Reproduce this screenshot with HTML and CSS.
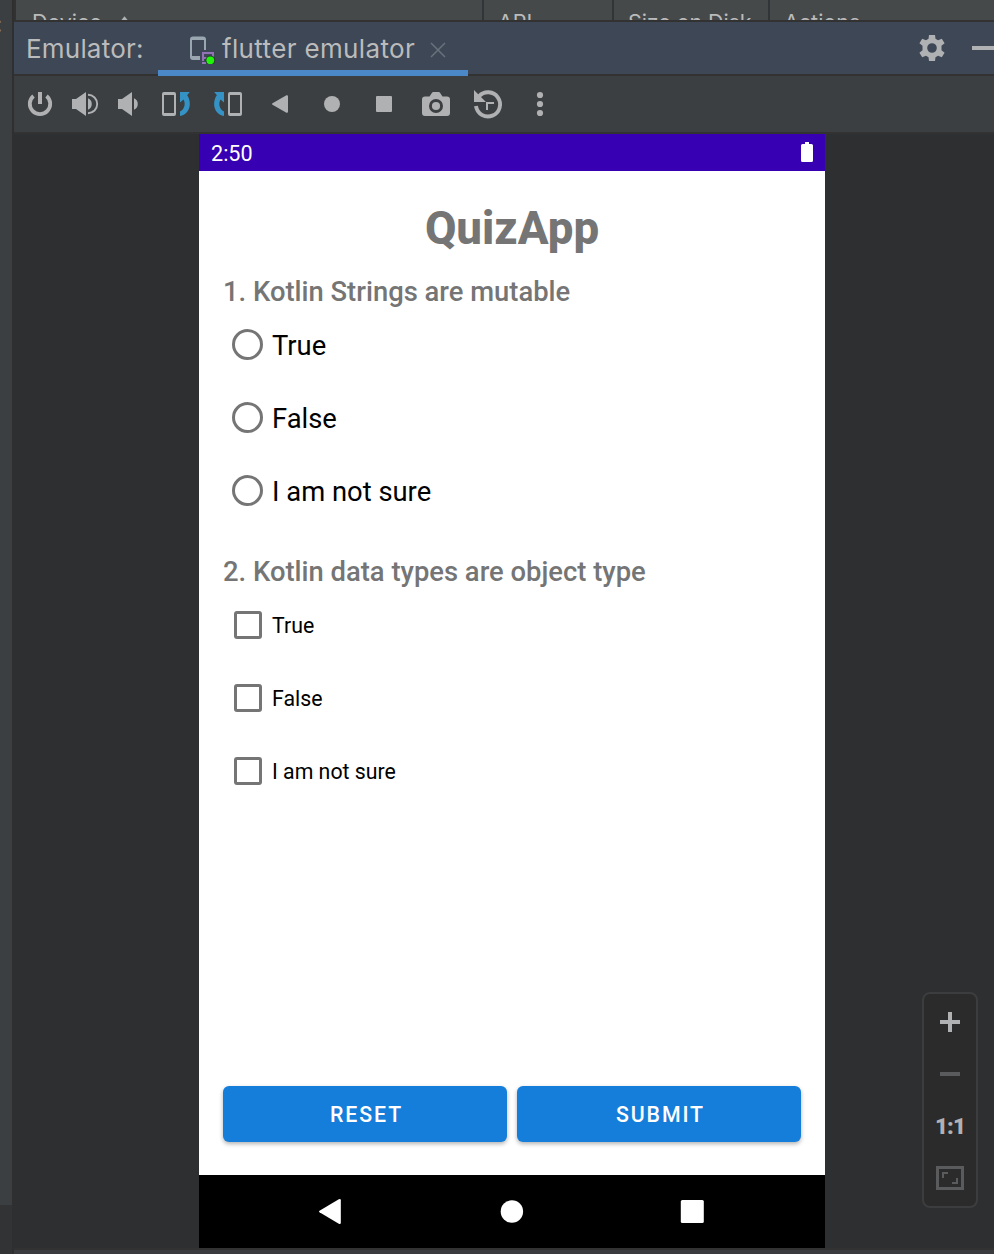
FILE: index.html
```html
<!DOCTYPE html>
<html lang="en">
<head>
<meta charset="utf-8">
<title>Emulator</title>
<link rel="stylesheet" href="styles.css">
</head>
<body>
<div class="ide">
  <aside class="stripe"><div class="stripe-fill"><span class="stripe-mark">:</span></div></aside>
  <main class="tool-window">
    <div class="table-head">
      <div class="th th-device"><span class="t-device">Device</span> <svg class="sort" viewBox="0 0 10 6"><path d="M0 6 5 0l5 6z"/></svg></div>
      <div class="th th-api"><span class="t-api">API</span></div>
      <div class="th th-size"><span class="t-size">Size on Disk</span></div>
      <div class="th th-actions"><span class="t-actions">Actions</span></div>
    </div>
    <header class="header">
      <div class="header-title"><span class="t-emu">Emulator:</span></div>
      <div class="tab">
        <svg class="tab-icon" viewBox="188 34 28 30">
          <path d="M206 50V39.500a3 3 0 0 0-3-3h-10a3 3 0 0 0-3 3V57a3 3 0 0 0 3 3h7v-4h-8V40h12v10z" fill="#9aa7b0"/>
          <path d="M202 61v-9h12v5h-2v-3h-8v3h4v2h-4v2zM202 62h4v2h-4z" fill="#9373b5"/>
          <circle cx="210.300" cy="60.300" r="4.900" fill="#27402f"/>
          <circle cx="210.300" cy="60.300" r="3.900" fill="#21f50a"/>
        </svg>
        <span class="t-tab">flutter emulator</span>
        <svg class="close" viewBox="0 0 16 16"><path d="M1 1l14 14M15 1 1 15"/></svg>
      </div>
      <div class="header-tools">
        <svg class="gear" viewBox="-13 -13 26 26"><path fill-rule="evenodd" d="M-3-13H3L3.500-9.200 6-7.800 9.800-9.300 12.600-4.700 9.500-2.300V2.300L12.600 4.700 9.800 9.300 6 7.800 3.500 9.200 3 13H-3L-3.500 9.200-6 7.800-9.800 9.300-12.600 4.700-9.500 2.300V-2.300L-12.600-4.700-9.800-9.300-6-7.800-3.500-9.200zM0-4.800A4.800 4.800 0 1 0 0 4.800 4.800 4.800 0 1 0 0-4.800z"/></svg>
        <span class="minimize"></span>
      </div>
    </header>
    <div class="toolbar">
      <svg width="52" viewBox="14 76 52 56"><path d="M38 92h4v12h-4z"/><path d="M33.500 96a10.200 10.200 0 1 0 13 0" fill="none" stroke="#afb1b3" stroke-width="3.800"/></svg>
      <svg width="40" viewBox="66 76 40 56"><path d="M72 99h4l10-7v24l-10-7h-4zM88 98.300a6.200 6.200 0 0 1 0 11.400z"/><path d="M88 94.800a9.200 9.200 0 0 1 0 18.400" fill="none" stroke="#afb1b3" stroke-width="1.900"/></svg>
      <svg width="44" viewBox="106 76 44 56"><path d="M118 99h4l10-7v24l-10-7h-4zM134 98.300a6.200 6.200 0 0 1 0 11.400z"/></svg>
      <svg width="52" viewBox="150 76 52 56"><path fill-rule="evenodd" d="M164 92h10a2 2 0 0 1 2 2v20a2 2 0 0 1-2 2h-10a2 2 0 0 1-2-2V94a2 2 0 0 1 2-2zM164 95v18h10V95z"/><path class="blue" d="M180 92h9.800l-2.700 3.200c4.300 5.500 4.600 18.300-7.100 20.800v-4.500c5-2.300 5.700-8.500 3.500-12l-3.500 3z"/></svg>
      <svg width="52" viewBox="202 76 52 56"><path fill-rule="evenodd" d="M230 92h10a2 2 0 0 1 2 2v20a2 2 0 0 1-2 2h-10a2 2 0 0 1-2-2V94a2 2 0 0 1 2-2zM230 95v18h10V95z"/><path class="blue" d="M224 92h-9.800l2.700 3.200c-4.300 5.500-4.600 18.300 7.100 20.800v-4.500c-5-2.300-5.700-8.500-3.500-12l3.500 3z"/></svg>
      <svg width="52" viewBox="254 76 52 56"><path d="M272.500 103.200l13.500-7.700c1-.5 2-.2 2 1v15c0 1.200-1 1.500-2 1l-13.500-7.700q-1.200-.8 0-1.600z"/></svg>
      <svg width="52" viewBox="306 76 52 56"><circle cx="332" cy="104" r="8"/></svg>
      <svg width="52" viewBox="358 76 52 56"><rect x="376" y="96" width="16" height="16" rx="1"/></svg>
      <svg width="52" viewBox="410 76 52 56"><path fill-rule="evenodd" d="M429.500 96.500l2.500-3.800q.4-.7 1.400-.7h5.200q1 0 1.400.7l2.500 3.800h4.500a3 3 0 0 1 3 3V113a3 3 0 0 1-3 3h-22a3 3 0 0 1-3-3V99.500a3 3 0 0 1 3-3zM436 99a7 7 0 1 0 0 14 7 7 0 1 0 0-14z"/><circle cx="436" cy="106" r="4.100"/></svg>
      <svg width="52" viewBox="462 76 52 56"><path d="M479 96.300A12.100 12.100 0 1 1 476 106" fill="none" stroke="#afb1b3" stroke-width="3.900"/><path d="M474 90l12 12h-12zM486 102h8v2h-6v6h-2z"/></svg>
      <svg width="52" viewBox="514 76 52 56"><circle cx="540" cy="95" r="3.100"/><circle cx="540" cy="104" r="3.100"/><circle cx="540" cy="113" r="3.100"/></svg>
    </div>
    <section class="stage">
      <div class="phone">
        <div class="status"><span class="t-clock">2:50</span><svg class="battery" viewBox="0 0 12 20"><path d="M4 0h4v2h2.500Q12 2 12 3.500v15q0 1.500-1.500 1.500h-9Q0 20 0 18.500v-15Q0 2 1.500 2H4z"/></svg></div>
        <div class="app">
          <h1 class="title"><span class="t-title">QuizApp</span></h1>
          <h2 class="question"><span class="t-q1">1. Kotlin Strings are mutable</span></h2>
          <div class="option"><i class="radio"></i><span class="label">True</span></div>
          <div class="option"><i class="radio"></i><span class="label">False</span></div>
          <div class="option"><i class="radio"></i><span class="label">I am not sure</span></div>
          <h2 class="question second"><span class="t-q2">2. Kotlin data types are object type</span></h2>
          <div class="option small"><i class="check"></i><span class="label">True</span></div>
          <div class="option small"><i class="check"></i><span class="label">False</span></div>
          <div class="option small"><i class="check"></i><span class="label">I am not sure</span></div>
          <div class="buttons">
            <button class="btn">RESET</button>
            <button class="btn">SUBMIT</button>
          </div>
        </div>
        <svg class="nav" viewBox="199 1175 626 73"><path d="M319.500 1210.700l19.300-11.400q2-1 2 1v22.400q0 2-2 1l-19.300-11.400q-1.200-.8 0-1.600z"/><circle cx="511.900" cy="1211.500" r="11.200"/><rect x="680.800" y="1200.100" width="23" height="22.800" rx="1.500"/></svg>
      </div>
      <div class="zoom">
        <svg viewBox="0 0 28 52"><path d="M12 18h4v8h8v4h-8v8h-4v-8H4v-4h8z"/></svg>
        <svg class="dim" viewBox="0 0 28 52"><path d="M4 26h20v4H4z"/></svg>
        <span class="one">1:1</span>
        <svg class="dim" viewBox="0 0 28 52"><path fill-rule="evenodd" d="M0 16h28v24H0zM3 19v18h22V19z"/><path d="M6 22h6v2H8v4H6zM22 34h-6v-2h4v-4h2z"/></svg>
      </div>
    </section>
    <footer class="footer"></footer>
  </main>
</div>
</body>
</html>
```
FILE: styles.css
```css
* { box-sizing: border-box; }
body { margin: 0; background: #323232; overflow: hidden; }
svg { display: block; flex: none; }
.ide { display: flex; width: 994px; height: 1254px; font-family: Inter, sans-serif; color: #bbbbbb; overflow: hidden; }
.stripe { width: 14px; flex: none; background: #323334; border-right: 2px solid #2f2f30; }
.stripe-fill { height: 1205px; background: #3c3f41; overflow: hidden; }
.stripe-mark { display: block; margin: 11px 0 0 -4px; font-size: 22px; line-height: 26px; color: #8f9193; }
.tool-window { flex: 1; min-width: 0; display: flex; flex-direction: column; }

.table-head { display: flex; height: 22px; border-bottom: 2px solid #323232; border-left: 2px solid #323232; background: #45494a; overflow: hidden; font-size: 21.500px; line-height: 26px; }
.th { display: flex; padding: 9px 0 0 16px; border-right: 2px solid #323537; white-space: nowrap; height: 40px; }
.th-device { width: 468px; }
.th-api { width: 130px; padding-left: 14px; }
.th-size { width: 156px; padding-left: 14px; letter-spacing: -.1px; }
.th-actions { flex: 1; border-right: 0; padding-left: 14px; }
.sort { width: 9px; height: 6px; margin: 7px 0 0 18px; fill: #afb1b3; }

.header { display: flex; height: 54px; background: #3d4755; border-bottom: 2px solid #323232; font-size: 26px; line-height: 54px; white-space: nowrap; }
.header-title { width: 144px; padding-left: 12px; }
.tab { display: flex; width: 310px; height: 54px; padding-left: 30px; border-bottom: 6px solid #4a88c7; }
.tab-icon { width: 28px; height: 30px; margin: 12px 6px 0 0; }
.close { width: 16px; height: 16px; margin: 20px 0 0 auto; margin-right: 22px; stroke: #67727d; stroke-width: 1.500; }
.header-tools { display: flex; margin-left: auto; align-items: center; gap: 27px; height: 52px; }
.gear { width: 26px; height: 26px; fill: #afb1b3; }
.minimize { width: 22px; height: 4px; background: #afb1b3; }
.t-emu { letter-spacing: .2px; }
.t-tab { letter-spacing: .35px; }

.toolbar { display: flex; height: 58px; background: #3c3f41; border-bottom: 2px solid #323232; fill: #afb1b3; }
.toolbar svg { height: 56px; }
.blue { fill: #3592c4; }

.stage { height: 1114px; display: flex; background: #2e2f31; padding-left: 185px; }
.phone { width: 626px; display: flex; flex-direction: column; background: #fff; font-family: Roboto, sans-serif; }
.status { height: 36.500px; display: flex; justify-content: space-between; align-items: center; padding: 2px 12px 0 12px; background: #3700b3; color: #fff; font-size: 21.600px; }
.battery { width: 12px; height: 20px; fill: #fff; margin-top: -2px; }
.app { flex: 1; display: flex; flex-direction: column; padding: 31.500px 24px 33px; }
.title { margin: 0; height: 54px; line-height: 54px; font-size: 45.650px; font-weight: 800; color: #757575; text-align: center; }
.question { margin: 19px 0 0; height: 33px; line-height: 34px; font-size: 27.390px; font-weight: 500; color: #757575; white-space: nowrap; }
.question.second { margin-top: 28px; }
.option { height: 73px; display: flex; align-items: center; font-size: 27.390px; color: #000; }
.label { padding-top: 2px; }
.option.small { font-size: 21.300px; }
.radio { width: 31px; height: 31px; border: 3px solid #757575; border-radius: 50%; margin: 0 9px 0 9px; }
.check { width: 28px; height: 28px; border: 3px solid #757575; border-radius: 3px; margin: 0 10.500px 0 10.500px; }
.buttons { margin-top: auto; display: flex; gap: 10px; }
.btn { flex: 1; height: 56px; border: 0; border-radius: 6px; background: #157eda; color: #fff; font: 500 21.300px Roboto, sans-serif; letter-spacing: 1.900px; box-shadow: 0 2px 4px rgba(0,0,0,.3); padding: 1px 0 0 3px; }
.nav { width: 626px; height: 73px; background: #000; fill: #fff; }

.zoom { width: 56px; height: 216px; margin: 858px 16px 0 auto; border: 2px solid #3c3d3e; border-radius: 8px; background: #2b2b2b; display: flex; flex-direction: column; align-items: center; fill: #afb1b3; }
.zoom svg { width: 28px; height: 52px; }
.zoom .dim { fill: #5a5b5c; }
.one { height: 52px; font: 900 22.500px/56px Roboto, sans-serif; color: #afb1b3; letter-spacing: -1px; }
.footer { flex: 1; border-top: 2px solid #323232; background: #3a3b3e; }
```
